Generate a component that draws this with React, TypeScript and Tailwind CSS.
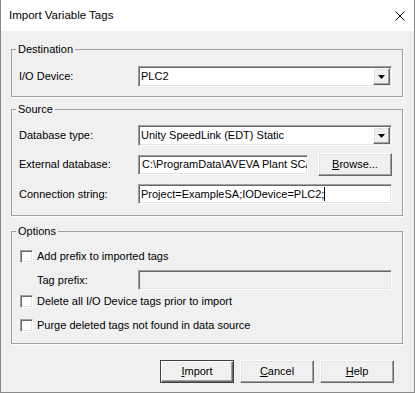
import React from "react";

const sunken =
  "border border-t-[#a0a0a0] border-l-[#a0a0a0] border-b-white border-r-white shadow-[inset_1px_1px_0_#696969,inset_-1px_-1px_0_#e3e3e3]";
const raised =
  "border border-t-white border-l-white border-b-[#696969] border-r-[#696969] shadow-[inset_-1px_-1px_0_#a0a0a0,inset_1px_1px_0_#e3e3e3]";

const Group = ({ title, className, children }: { title: string; className: string; children: React.ReactNode }) => (
  <fieldset
    className={`w-[392px] border border-[#a0a0a0] shadow-[1px_1px_0_#fff] pl-[7px] pr-[10px] ${className}`}
  >
    <legend className="px-[2px] -ml-[3px] leading-[13px]">{title}</legend>
    {children}
  </fieldset>
);

const Row = ({ label, className = "", children }: { label: string; className?: string; children: React.ReactNode }) => (
  <div className={`flex items-center ${className}`}>
    <div className="w-[119px] shrink-0">{label}</div>
    {children}
  </div>
);

const Combo = ({ value }: { value: string }) => (
  <div className={`flex-1 h-[21px] bg-white flex items-center pl-[2px] ${sunken}`}>
    <span className="flex-1 truncate">{value}</span>
    <div className={`w-[17px] h-[17px] mr-[1px] bg-[#f0f0f0] flex items-center justify-center ${raised}`}>
      <svg width="7" height="4" viewBox="0 0 7 4">
        <polygon points="0,0 7,0 3.5,4" fill="#000" />
      </svg>
    </div>
  </div>
);

const Check = ({ label, className = "" }: { label: string; className?: string }) => (
  <div className={`flex items-center h-[13px] ${className}`}>
    <div className={`w-[13px] h-[13px] ml-[1px] bg-white shrink-0 ${sunken}`} />
    <span className="ml-[4px]">{label}</span>
  </div>
);

const Button = ({ children, main }: { children: React.ReactNode; main?: boolean }) => (
  <button
    className={`w-[74px] h-[23px] bg-[#f0f0f0] flex items-center justify-center ${
      main
        ? "border border-[#404040] shadow-[inset_1px_1px_0_#fff,inset_-1px_-1px_0_#696969,inset_-2px_-2px_0_#a0a0a0]"
        : raised
    }`}
  >
    {children}
  </button>
);

export default function App() {
  return (
    <div className="w-[415px] h-[393px] flex flex-col bg-[#f0f0f0] border-x border-b border-[#888888] font-['Liberation_Sans',Arial,sans-serif] text-[11px] text-black">
      <div className="h-[31px] shrink-0 bg-white flex items-center justify-between pl-[8px] pr-[9px]">
        <span className="text-[11.5px]">Import Variable Tags</span>
        <svg width="10" height="10" viewBox="0 0 10 10">
          <path d="M0.5 0.5 L9.5 9.5 M9.5 0.5 L0.5 9.5" stroke="#000" strokeWidth="1" />
        </svg>
      </div>

      <div className="flex flex-col pl-[10px]">
        <Group title="Destination" className="mt-[12px] pt-[10px] pb-[9px]">
          <Row label="I/O Device:">
            <Combo value="PLC2" />
          </Row>
        </Group>

        <Group title="Source" className="mt-[6px] pt-[9px] pb-[11px]">
          <Row label="Database type:">
            <Combo value="Unity SpeedLink (EDT) Static" />
          </Row>
          <Row label="External database:" className="mt-[7px] h-[23px]">
            <div className={`w-[170px] h-[20px] bg-white flex items-center pl-[3px] overflow-hidden whitespace-nowrap ${sunken}`}>
              <span>C:\ProgramData\AVEVA Plant SCA</span>
            </div>
            <div className="ml-[10px]">
              <Button>
                <span>
                  <u>B</u>rowse...
                </span>
              </Button>
            </div>
          </Row>
          <Row label="Connection string:" className="mt-[8px]">
            <div className={`flex-1 h-[20px] bg-white flex items-center pl-[2px] whitespace-nowrap ${sunken}`}>
              <span>Project=ExampleSA;IODevice=PLC2;</span>
              <span className="w-[1px] h-[14px] bg-black" />
            </div>
          </Row>
        </Group>

        <Group title="Options" className="mt-[9px] pt-[12px] pb-[11px]">
          <Check label="Add prefix to imported tags" />
          <div className="flex items-center mt-[7px]">
            <div className="w-[119px] shrink-0 pl-[18px]">Tag prefix:</div>
            <div className={`flex-1 h-[20px] bg-[#f0f0f0] ${sunken}`} />
          </div>
          <Check label="Delete all I/O Device tags prior to import" className="mt-[5px]" />
          <Check label="Purge deleted tags not found in data source" className="mt-[11px]" />
        </Group>
      </div>

      <div className="flex justify-end gap-[6px] pr-[20px] mt-[16px]">
        <Button main>
          <span>
            <u>I</u>mport
          </span>
        </Button>
        <Button>
          <span>
            <u>C</u>ancel
          </span>
        </Button>
        <Button>
          <span>
            <u>H</u>elp
          </span>
        </Button>
      </div>
    </div>
  );
}
